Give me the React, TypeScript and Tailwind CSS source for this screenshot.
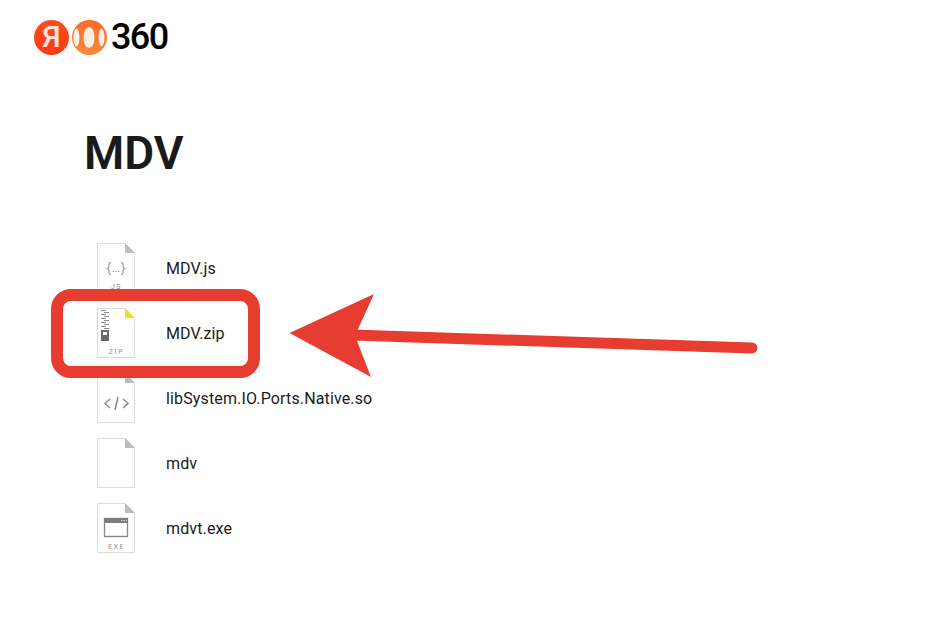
import type { ReactNode } from 'react';

// Icono de archivo con esquina doblada
function FileIcon({ corner = '#bdbdbd', children }: { corner?: string; children?: ReactNode }) {
  return (
    <svg width="38" height="50" viewBox="0 0 38 50" className="shrink-0">
      <path d="M0.5 0.5H28L37.5 10V49.5H0.5Z" fill="#fff" stroke="#dcdcdc" />
      <path d="M28 0L38 10H28Z" fill={corner} />
      {children}
    </svg>
  );
}

function IconLabel({ text }: { text: string }) {
  return (
    <text
      x="19.5"
      y="45.5"
      textAnchor="middle"
      fontSize="7"
      letterSpacing="1.6"
      fill="#8f8f8f"
      fontFamily="Roboto, sans-serif"
    >
      {text}
    </text>
  );
}

const files: { name: string; icon: ReactNode }[] = [
  {
    name: 'MDV.js',
    icon: (
      <FileIcon>
        <path
          d="M14 19.500C11.500 19.500 12 21 12 23C12 24.500 12 25 10.500 25.500C12 26 12 26.500 12 28C12 30 11.500 31.500 14 31.500M24 19.500C26.500 19.500 26 21 26 23C26 24.500 26 25 27.500 25.500C26 26 26 26.500 26 28C26 30 26.500 31.500 24 31.500"
          fill="none"
          stroke="#969696"
          strokeWidth="1.1"
        />
        <path d="M15.500 28.500H17M18.300 28.500H19.800M21 28.500H22.500" stroke="#a0a0a0" strokeWidth="1" />
        <IconLabel text="JS" />
      </FileIcon>
    ),
  },
  {
    name: 'MDV.zip',
    icon: (
      <FileIcon corner="#ffdb1f">
        <path
          d="M4 2.500H9M7 4.500H12M4 6.500H9M7 8.500H12M4 10.500H9M7 12.500H12M4 14.500H9M7 16.500H12M4 18.500H9M7 20.500H12"
          stroke="#8a8a8a"
          strokeWidth="1"
        />
        <path fillRule="evenodd" d="M4 22H12V33H4ZM6 24V27H10V24Z" fill="#6a6a6a" />
        <IconLabel text="ZIP" />
      </FileIcon>
    ),
  },
  {
    name: 'libSystem.IO.Ports.Native.so',
    icon: (
      <FileIcon>
        <path
          d="M13 26L8 30.500L13 35M26 26L31 30.500L26 35M21 24L18 37"
          fill="none"
          stroke="#8a8a8a"
          strokeWidth="1.500"
        />
      </FileIcon>
    ),
  },
  { name: 'mdv', icon: <FileIcon /> },
  {
    name: 'mdvt.exe',
    icon: (
      <FileIcon>
        <rect x="7.500" y="15.500" width="23" height="18" fill="none" stroke="#8a8a8a" strokeWidth="1.400" />
        <rect x="7" y="15" width="24" height="5" fill="#7d7d7d" />
        <path d="M24 17.500H30" stroke="#d5d5d5" strokeDasharray="1.500 1" />
        <IconLabel text="EXE" />
      </FileIcon>
    ),
  },
];

function Logo() {
  return (
    <div className="flex items-center">
      <div className="flex h-[35px] w-[35px] items-center justify-center rounded-full bg-gradient-to-b from-[#fc4c1c] to-[#f93a14] font-['Roboto',sans-serif] text-[30px] font-medium leading-none text-[#ffe6dc]">
        Я
      </div>
      <svg width="35" height="35" viewBox="0 0 35 35" className="ml-[3px]">
        <defs>
          <linearGradient id="orb" x1="0" y1="0" x2="0" y2="1">
            <stop offset="0" stopColor="#fb6a2a" />
            <stop offset="1" stopColor="#fa8a3c" />
          </linearGradient>
        </defs>
        <circle cx="17.500" cy="17.500" r="17.500" fill="url(#orb)" />
        <ellipse cx="4.500" cy="17.500" rx="3" ry="9" fill="#ffeee4" />
        <ellipse cx="17" cy="17.500" rx="5.500" ry="10.500" fill="#ffeee4" />
        <ellipse cx="29.500" cy="17.500" rx="3" ry="9" fill="#ffeee4" />
      </svg>
      <span className="ml-[4px] font-['Roboto',sans-serif] text-[36px] font-medium leading-none tracking-[-1.6px] text-black">
        360
      </span>
    </div>
  );
}

export default function App() {
  return (
    <div className="relative h-[622px] w-[935px] overflow-hidden bg-white font-['Roboto',sans-serif] text-[#1a1a1a]">
      <header className="pl-[34px] pt-[19px]">
        <Logo />
      </header>

      <h1 className="ml-[84px] mt-[70px] text-[46px] font-semibold leading-[56px] text-[#1a1a1a]">MDV</h1>

      <ul className="ml-[97px] mt-[54px]">
        {files.map((file) => (
          <li key={file.name} className="flex h-[65px] items-center gap-[31px]">
            {file.icon}
            <span className="pt-[2px] text-[16px] leading-5 tracking-[0.14px]">{file.name}</span>
          </li>
        ))}
      </ul>

      {/* Anotación roja sobre la captura */}
      <div className="absolute left-[51px] top-[289px] h-[89px] w-[209px] rounded-[20px] border-[12px] border-[#e73d31]" />
      <svg width="935" height="622" className="pointer-events-none absolute left-0 top-0">
        <path d="M352 335L752 348" stroke="#e73d31" strokeWidth="11" strokeLinecap="round" />
        <path d="M289.500 333L374 294L358 329L357 341L371 377Z" fill="#e73d31" />
      </svg>
    </div>
  );
}
